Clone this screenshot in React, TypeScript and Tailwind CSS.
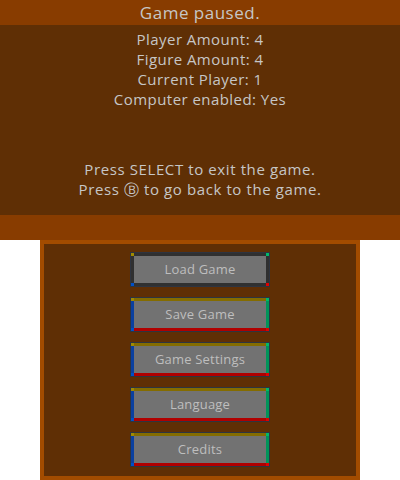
import React from "react";

type Edge = { top: string; left: string; right: string; bottom: string };

const CORNERS = {
  tl: "bg-[#a08a00]",
  tr: "bg-[#00b86a]",
  bl: "bg-[#0050c8]",
  br: "bg-[#e00000]",
};

const idleEdge: Edge = {
  top: "bg-[#846c00]",
  left: "bg-[#0a40a0]",
  right: "bg-[#00945a]",
  bottom: "bg-[#b00000]",
};

const activeEdge: Edge = {
  top: "bg-[#303030]",
  left: "bg-[#303030]",
  right: "bg-[#303030]",
  bottom: "bg-[#303030]",
};

const MenuButton: React.FC<{ label: string; active?: boolean }> = ({
  label,
  active,
}) => {
  const e = active ? activeEdge : idleEdge;
  return (
    <button className="grid h-[35px] w-[140px] grid-cols-[3px_1fr_3px] grid-rows-[3px_1fr_3px] border border-[#2e3440]">
      <span className={CORNERS.tl} />
      <span className={e.top} />
      <span className={CORNERS.tr} />
      <span className={e.left} />
      <span className="flex items-center justify-center bg-[#727272] text-[13px] tracking-[0.2px] text-[#bebebe]">
        {label}
      </span>
      <span className={e.right} />
      <span className={CORNERS.bl} />
      <span className={e.bottom} />
      <span className={CORNERS.br} />
    </button>
  );
};

const App: React.FC = () => {
  return (
    <div className="flex h-[480px] w-[400px] flex-col bg-white font-['Open_Sans',sans-serif] text-[#c6c6c6]">
      <section className="flex h-[240px] flex-col">
        <header className="flex h-[25px] items-center justify-center bg-[#883c00] text-[17px] tracking-[0.5px]">
          Game paused.
        </header>
        <div className="flex flex-1 flex-col items-center bg-[#5f2f05] pt-[4px] text-[15px] leading-[20px] tracking-[0.45px]">
          <p>Player Amount: 4</p>
          <p>Figure Amount: 4</p>
          <p>Current Player: 1</p>
          <p>Computer enabled: Yes</p>
          <p className="mt-[50px] tracking-[0.6px]">Press SELECT to exit the game.</p>
          <p className="tracking-[0.6px]">Press Ⓑ to go back to the game.</p>
        </div>
        <div className="h-[25px] bg-[#883c00]" />
      </section>
      <section className="mx-[40px] flex h-[240px] w-[320px] flex-col items-center gap-[10px] border-4 border-[#a24c00] bg-[#5f2f05] pt-[8px]">
        <MenuButton label="Load Game" active />
        <MenuButton label="Save Game" />
        <MenuButton label="Game Settings" />
        <MenuButton label="Language" />
        <MenuButton label="Credits" />
      </section>
    </div>
  );
};

export default App;
